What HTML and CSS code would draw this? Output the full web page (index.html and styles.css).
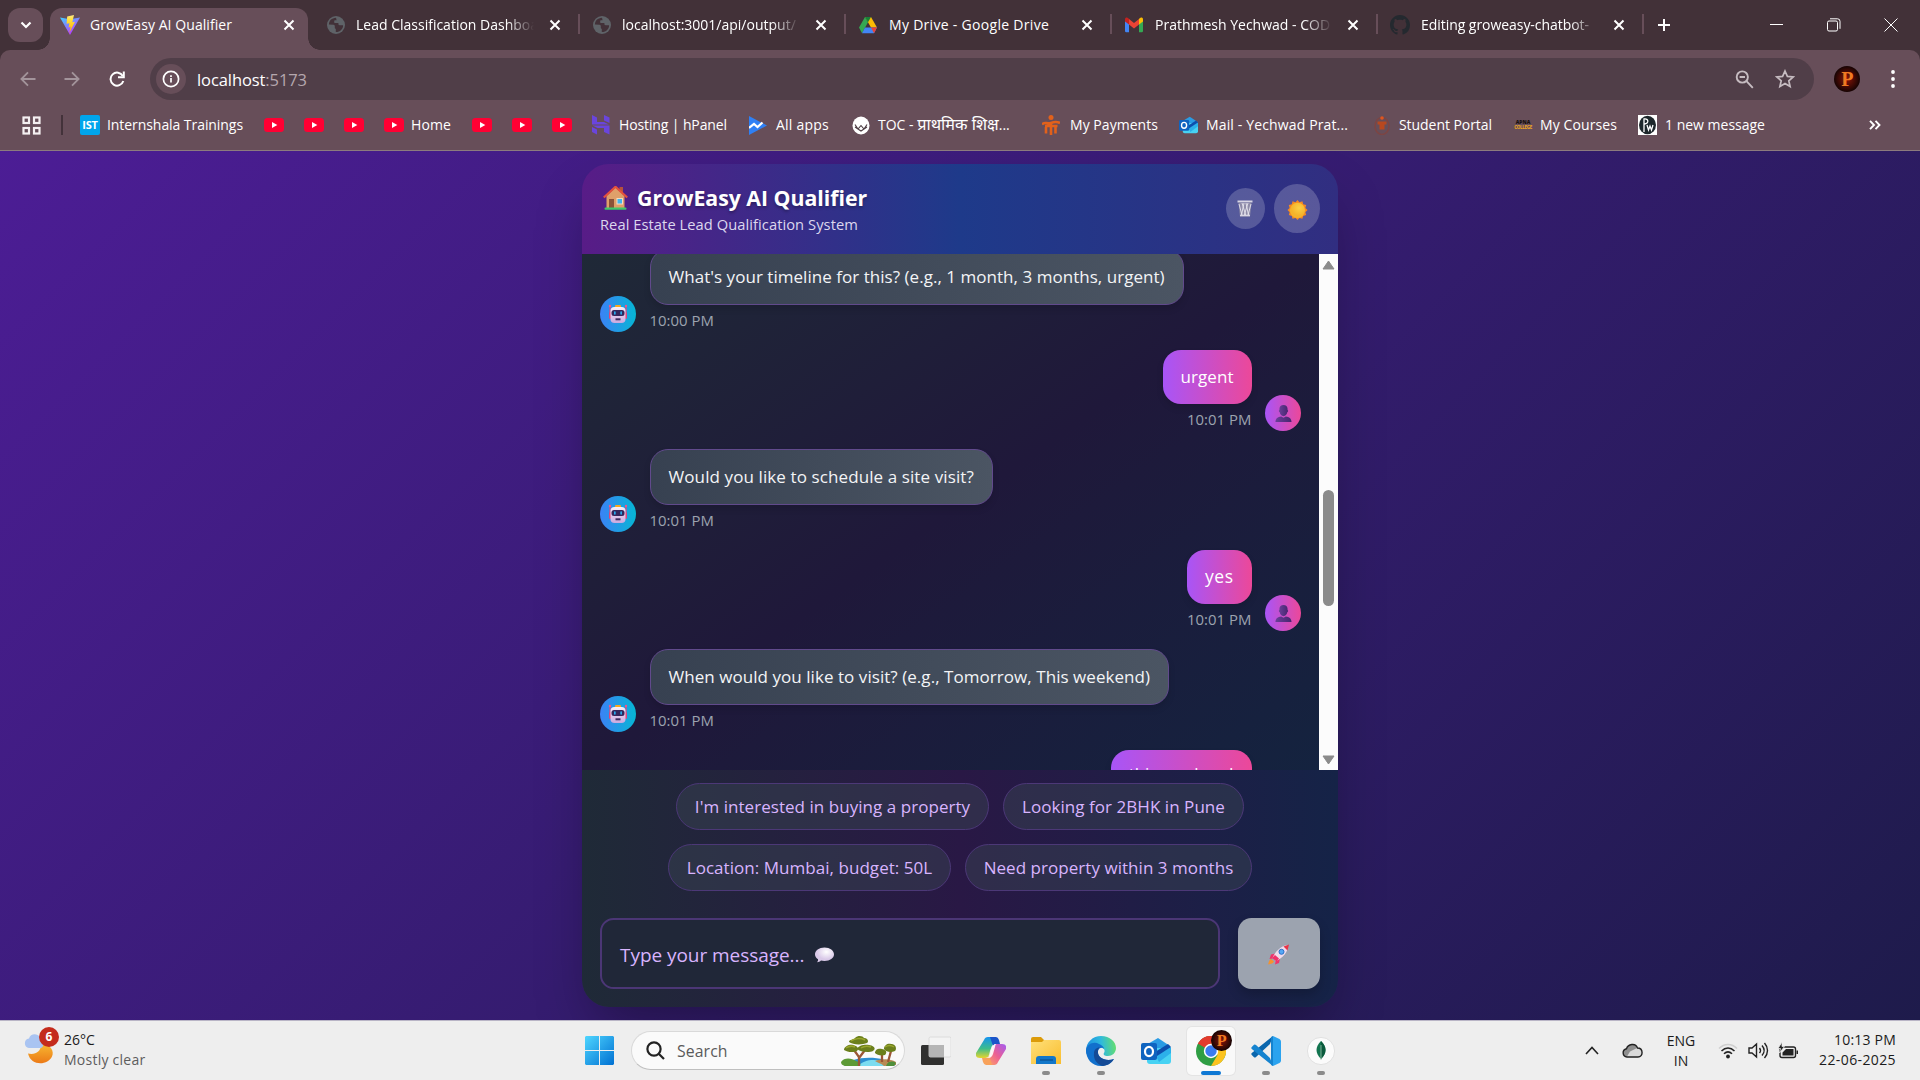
FILE: index.html
```html
<!DOCTYPE html>
<html lang="en">
<head>
<meta charset="utf-8">
<title>GrowEasy AI Qualifier</title>
<link rel="stylesheet" href="styles.css">
</head>
<body>
<svg class="defs" width="0" height="0" aria-hidden="true">
  <defs>
    <linearGradient id="g-bolt" x1="0" y1="0" x2="0" y2="1"><stop offset="0" stop-color="#ffea83"/><stop offset=".3" stop-color="#ffdd35"/><stop offset="1" stop-color="#ffa800"/></linearGradient>
    <linearGradient id="g-vite" x1="0" y1="0" x2=".6" y2="1"><stop offset="0" stop-color="#41d1ff"/><stop offset="1" stop-color="#bd34fe"/></linearGradient>
    <linearGradient id="g-head" x1="0" y1="0" x2="0" y2="1"><stop offset="0" stop-color="#f8eef8"/><stop offset="1" stop-color="#c8a9e0"/></linearGradient>
    <linearGradient id="g-user" x1="0" y1="0" x2="1" y2="0"><stop offset="0" stop-color="#6a3f99"/><stop offset="1" stop-color="#47256f"/></linearGradient>
    <linearGradient id="g-win" gradientUnits="userSpaceOnUse" x1="0" y1="0" x2="29" y2="29"><stop offset="0" stop-color="#4fd6ff"/><stop offset="1" stop-color="#0070d2"/></linearGradient>
    <linearGradient id="g-edge" x1="0" y1=".3" x2="1" y2=".2"><stop offset="0" stop-color="#1d8fe0"/><stop offset=".5" stop-color="#2fb9dd"/><stop offset="1" stop-color="#66e06a"/></linearGradient>
    <linearGradient id="g-moon" x1="0" y1="0" x2="0" y2="1"><stop offset="0" stop-color="#f7b731"/><stop offset="1" stop-color="#ec7a17"/></linearGradient>
    <linearGradient id="g-folder" x1="0" y1="0" x2="1" y2="1"><stop offset="0" stop-color="#ffe07a"/><stop offset="1" stop-color="#f9bd2e"/></linearGradient>
    <linearGradient id="g-copa" x1="0" y1="0" x2="0" y2="1"><stop offset="0" stop-color="#1592f0"/><stop offset=".55" stop-color="#3cbd8c"/><stop offset="1" stop-color="#e6d52d"/></linearGradient>
    <linearGradient id="g-copb" x1="1" y1="0" x2="0" y2="1"><stop offset="0" stop-color="#a25cf2"/><stop offset=".5" stop-color="#ec5f93"/><stop offset="1" stop-color="#ffab62"/></linearGradient>
    <radialGradient id="g-ava"><stop offset="0" stop-color="#8a1508"/><stop offset="1" stop-color="#160303"/></radialGradient>
    <radialGradient id="g-sun" cx=".6" cy=".35"><stop offset="0" stop-color="#fbd046"/><stop offset="1" stop-color="#f5b32a"/></radialGradient>
    <radialGradient id="g-talk" cx=".6" cy=".3"><stop offset="0" stop-color="#fff"/><stop offset="1" stop-color="#d9c9e8"/></radialGradient>
    <symbol id="close" viewBox="0 0 12 12"><path d="M1.500 1.500l9 9M10.500 1.500l-9 9" stroke="#fff" stroke-width="2"/></symbol>
    <symbol id="globe" viewBox="0 0 20 20"><circle cx="10" cy="10" r="9" fill="#5f6368"/><path d="M10 2.800C5.500 3 3 6 2.900 9.500l4.600.3c1 .1 1.300.8 1.300 1.500v1.500c0 .6.400 1 1 1v3.300c4 .2 7.300-2.800 7.300-6.800h-3.500c-.8 0-1.200-.5-1.200-1.200V8H9.200c-.7 0-1-.4-1-1V6.200c0-.6.400-1 1-1h1.400z" fill="#423138"/></symbol>
    <symbol id="yt" viewBox="0 0 20 14"><rect width="20" height="14" rx="3.500" fill="#ff0033"/><path d="M8 4l5.300 3L8 10z" fill="#fff"/></symbol>
    <symbol id="outlook" viewBox="0 0 30 26"><path d="M5 7L17 0l12 8v5H5z" fill="#2a9be4"/><path d="M6 10h24v13a3 3 0 01-3 3H9a3 3 0 01-3-3z" fill="#47d2f3"/><path d="M15 18l15-9v6L18 24z" fill="#2cb0ea"/><path d="M14 14L27 6l3 3-14 9z" fill="#0d4fae"/><rect y="5" width="16" height="17" rx="2" fill="#0f64c0"/><ellipse cx="8" cy="13.500" rx="4" ry="4.600" fill="none" stroke="#fff" stroke-width="2.200"/></symbol>
    <symbol id="robot" viewBox="0 0 20 20"><path d="M2 2v9M18 2v9" stroke="#d84a86" stroke-width="1.300"/><circle cx="2" cy="2" r="1.200" fill="#f2548c"/><circle cx="18" cy="2" r="1.200" fill="#f2548c"/><rect x="1" y="8" width="3" height="7" rx="1.500" fill="#e0457c"/><rect x="16" y="8" width="3" height="7" rx="1.500" fill="#e0457c"/><rect x="7" y="1" width="6" height="4" rx="1" fill="#f6a823"/><rect x="2.500" y="3" width="15" height="16" rx="4" fill="url(#g-head)"/><rect x="3.500" y="6" width="13" height="6" rx="2.500" fill="#33265c"/><rect x="6" y="7.300" width="1.700" height="3.400" rx=".8" fill="#27a8e8"/><rect x="12.300" y="7.300" width="1.700" height="3.400" rx=".8" fill="#27a8e8"/><rect x="7.500" y="14.300" width="5" height="2" fill="#3d2b5e"/></symbol>
    <symbol id="user" viewBox="0 0 18 19"><path d="M4.700 4.500C4.700 2 6.400.5 9 .5s4.300 1.500 4.300 4v1.200c.9.200.8 2-.2 2.300C12.600 10.500 11 12.300 9 12.300S5.400 10.500 4.900 8c-1-.3-1.100-2.100-.2-2.300z" fill="url(#g-user)"/><path d="M.5 18.500c0-3.700 2.600-5.500 6-5.900l2.500 1.500 2.500-1.500c3.400.4 6 2.200 6 5.900z" fill="url(#g-user)"/></symbol>
    <symbol id="ava" viewBox="0 0 26 26"><circle cx="13" cy="13" r="13" fill="url(#g-ava)"/><text x="13.300" y="20" text-anchor="middle" class="ava-letter">P</text></symbol>
  </defs>
</svg>

<div class="tabstrip">
  <div class="tab-search"><svg width="12" height="8" viewBox="0 0 12 8"><path d="M1.500 1.500L6 6l4.500-4.500" fill="none" stroke="#fff" stroke-width="2.200"/></svg></div>
  <div class="tab active">
    <svg width="20" height="20" viewBox="0 0 20 20"><path d="M0 2.500L10 20 20 2.500 10 4.300z" fill="url(#g-vite)"/><path d="M14 0L7.200 1.400l-.6 7.400 2.800-.6-.8 4.200 2-.6-1.300 6.300 5.700-11.300-2.700.5z" fill="url(#g-bolt)"/></svg>
    <span class="tab-title"><span class="t-grow">GrowEasy AI Qualifier</span></span><svg class="x" width="12" height="12"><use href="#close"/></svg>
  </div>
  <div class="tab"><svg width="20" height="20"><use href="#globe"/></svg><span class="tab-title fade"><span>Lead Classification Dashboa</span></span><svg class="x" width="12" height="12"><use href="#close"/></svg></div>
  <div class="tab"><svg width="20" height="20"><use href="#globe"/></svg><span class="tab-title fade"><span>localhost:3001/api/output/</span></span><svg class="x" width="12" height="12"><use href="#close"/></svg></div>
  <div class="tab"><svg width="20" height="20" viewBox="0 0 20 20"><path d="M7 2h6l6 10.500h-6z" fill="#fbbc04"/><path d="M7 2l3 5.200-6 11-3-5.700z" fill="#34a853"/><path d="M4 18.200l3-5.700h12l-3 5.700z" fill="#4285f4"/><path d="M13 12.500h6l-3 5.700z" fill="#ea4335"/><path d="M7 2h6l-3 5.200z" fill="#188038"/></svg><span class="tab-title"><span class="t-drive">My Drive - Google Drive</span></span><svg class="x" width="12" height="12"><use href="#close"/></svg></div>
  <div class="tab"><svg width="20" height="20" viewBox="0 0 20 20"><path d="M1 4.500V16q0 1.200 1.200 1.200H5V8z" fill="#4285f4"/><path d="M19 4.500V16q0 1.200-1.200 1.200H15V8z" fill="#34a853"/><path d="M5 9.500V4l5 4 5-4v5.500l-5 4z" fill="#ea4335"/><path d="M1 4.500C1 2.500 3 2 4.300 3.200L5 4v5.500L1 6.500z" fill="#c5221f"/><path d="M19 4.500c0-2-2-2.500-3.300-1.300L15 4v5.500l4-3z" fill="#fbbc04"/></svg><span class="tab-title fade"><span class="t-mail">Prathmesh Yechwad - COD</span></span><svg class="x" width="12" height="12"><use href="#close"/></svg></div>
  <div class="tab"><svg width="20" height="20" viewBox="0 0 16 16"><path fill="#24292f" d="M8 0C3.580 0 0 3.580 0 8c0 3.540 2.290 6.530 5.470 7.590.4.070.55-.17.55-.38 0-.19-.01-.82-.01-1.490-2.010.37-2.530-.49-2.690-.94-.09-.23-.48-.94-.82-1.130-.28-.15-.68-.52-.01-.53.63-.01 1.080.58 1.230.82.72 1.210 1.870.87 2.330.66.070-.52.280-.87.510-1.070-1.780-.2-3.640-.89-3.640-3.950 0-.87.310-1.590.82-2.150-.08-.2-.36-1.020.08-2.120 0 0 .67-.21 2.200.82.640-.18 1.320-.27 2-.27s1.360.09 2 .27c1.530-1.040 2.200-.82 2.200-.82.440 1.100.160 1.920.080 2.120.51.560.82 1.270.82 2.150 0 3.070-1.870 3.750-3.650 3.950.29.250.54.730.54 1.480 0 1.070-.01 1.930-.01 2.200 0 .21.150.46.55.38A8.010 8.010 0 0016 8c0-4.420-3.580-8-8-8z"/></svg><span class="tab-title fade"><span class="t-git">Editing groweasy-chatbot-</span></span><svg class="x" width="12" height="12"><use href="#close"/></svg></div>
  <div class="new-tab"><svg width="14" height="14" viewBox="0 0 14 14"><path d="M7 1v12M1 7h12" stroke="#fff" stroke-width="2"/></svg></div>
  <div class="win-buttons">
    <svg width="14" height="14" viewBox="0 0 14 14"><path d="M0 6.500h13" stroke="#fff"/></svg>
    <svg width="14" height="14" viewBox="0 0 14 14" fill="none" stroke="#fff"><rect x=".5" y="3" width="10" height="10" rx="1.500"/><path d="M3 .8h7.500a2.500 2.500 0 012.500 2.500v7.500"/></svg>
    <svg width="14" height="14" viewBox="0 0 14 14"><path d="M.5.5l13 13M13.500.5l-13 13" stroke="#fff"/></svg>
  </div>
</div>

<div class="toolbar">
  <div class="nav-row">
    <svg class="nav back" width="16" height="16" viewBox="0 0 16 16" fill="none" stroke="#a3949b" stroke-width="1.800"><path d="M15.500 8H1.500M8 1.300L1.400 8 8 14.700"/></svg>
    <svg class="nav fwd" width="16" height="16" viewBox="0 0 16 16" fill="none" stroke="#a3949b" stroke-width="1.800"><path d="M.5 8h14M8 1.300L14.600 8 8 14.700"/></svg>
    <svg class="nav reload" width="16" height="16" viewBox="0 0 16 16" fill="none" stroke="#fff" stroke-width="2"><path d="M13.800 5A6.500 6.500 0 1014.300 10"/><path d="M14.800.5v5.800H9"/></svg>
    <div class="omnibox">
      <div class="info"><svg width="18" height="18" viewBox="0 0 18 18"><circle cx="9" cy="9" r="7.600" fill="none" stroke="#fff" stroke-width="1.700"/><path d="M9 8v4.600M9 5.200v1.700" stroke="#fff" stroke-width="1.700"/></svg></div>
      <span class="url"><span>localhost<span class="port">:5173</span></span></span>
      <svg class="mag" width="19" height="19" viewBox="0 0 19 19" fill="none" stroke="#c6bcc1" stroke-width="1.900"><circle cx="7.300" cy="7" r="5.600"/><path d="M4.600 7H10M11.500 11.200l6.300 6.600"/></svg>
      <svg class="star" width="20" height="20" viewBox="0 0 20 20" fill="none" stroke="#c6bcc1" stroke-width="1.700"><path d="M10 2l2.400 5.400 5.800.5-4.400 3.900 1.300 5.800L10 14.500l-5.100 3.100 1.300-5.800-4.400-3.900 5.800-.5z"/></svg>
    </div>
    <svg class="profile" width="26" height="26"><use href="#ava"/></svg>
    <svg class="kebab" width="4" height="18" viewBox="0 0 4 18" fill="#fff"><circle cx="2" cy="2" r="1.900"/><circle cx="2" cy="9" r="1.900"/><circle cx="2" cy="16" r="1.900"/></svg>
  </div>
  <div class="bookmarks">
    <svg class="apps" width="19" height="19" viewBox="0 0 19 19" fill="none" stroke="#f5f0f2" stroke-width="2.200"><rect x="1.500" y="1.500" width="5.500" height="5.500"/><rect x="12" y="1.500" width="5.500" height="5.500"/><rect x="1.500" y="12" width="5.500" height="5.500"/><rect x="12" y="12" width="5.500" height="5.500"/></svg>
    <span class="bar"></span>
    <div class="bm b-ist"><span class="ist">IST</span><span class="t-ist">Internshala Trainings</span></div>
    <div class="bm b-yt"><svg width="20" height="14"><use href="#yt"/></svg></div>
    <div class="bm b-yt"><svg width="20" height="14"><use href="#yt"/></svg></div>
    <div class="bm b-yt"><svg width="20" height="14"><use href="#yt"/></svg></div>
    <div class="bm b-home"><svg width="20" height="14"><use href="#yt"/></svg><span class="t-home">Home</span></div>
    <div class="bm b-yt"><svg width="20" height="14"><use href="#yt"/></svg></div>
    <div class="bm b-yt"><svg width="20" height="14"><use href="#yt"/></svg></div>
    <div class="bm b-yt"><svg width="20" height="14"><use href="#yt"/></svg></div>
    <div class="bm b-host"><svg width="18" height="20" viewBox="0 0 18 20" fill="#6a45dc"><path d="M0 0l5 2.500V7h7l5 2.500H0zM12 0l5.500 2.500V8L12 5.500zM17.500 19.500L12 17v-4H5.500L.5 10.500h17zM0 12l5 2.500v5L0 17z"/></svg><span class="t-host">Hosting | hPanel</span></div>
    <div class="bm b-all"><svg width="18" height="19" viewBox="0 0 18 19"><path d="M0 0l18 9.500L0 19z" fill="#2f80f5"/><path d="M0 12l5-4 3.500 3 5-4.500" stroke="#fff" stroke-width="2.200" fill="none"/></svg><span class="t-all">All apps</span></div>
    <div class="bm b-toc"><svg width="18" height="19" viewBox="0 0 18 19"><ellipse cx="9" cy="9.500" rx="8.500" ry="9" fill="#fff"/><path d="M3 8.500l3 4.500 3-3.500 3 3.500 3-4.500M3 11l6 4 6-4" stroke="#4c3d43" stroke-width="1.100" fill="none"/></svg><span class="t-toc">TOC - <span class="deva">प्राथमिक शिक्ष</span>...</span></div>
    <div class="bm b-pay"><svg width="18" height="20" viewBox="0 0 18 20" fill="none" stroke="#e2611b" stroke-width="2.600"><circle cx="9" cy="2.500" r="2.500" fill="#e2611b" stroke="none"/><path d="M0 9.500c3-3.500 5 0 9-1.500s6-1.500 9 0M3 11h12.500M4 12v6.500M9 9v11M13.500 12v6.500"/></svg><span class="t-pay">My Payments</span></div>
    <div class="bm b-mail"><svg width="19" height="18"><use href="#outlook"/></svg><span class="t-ml">Mail - Yechwad Prat...</span></div>
    <div class="bm b-stu"><svg width="16" height="19" viewBox="0 0 16 19"><ellipse cx="8" cy="10" rx="7" ry="8.500" fill="none" stroke="#7d4543" stroke-width="1.500"/><circle cx="8" cy="2" r="1.800" fill="#e0561f"/><path d="M3.500 5.500h9v3h-2v5h-5v-5h-2z" fill="#b8481f"/></svg><span class="t-stu">Student Portal</span></div>
    <div class="bm b-cou"><span class="apna"><b>APNA</b><i>COLLEGE</i></span><span class="t-cou">My Courses</span></div>
    <div class="bm b-new"><svg width="19" height="20" viewBox="0 0 19 20"><rect width="19" height="20" fill="#fff"/><ellipse cx="9.500" cy="10" rx="8.500" ry="9.200" fill="#1d272b"/><path d="M6 17V4c5-1 5 5 .5 5M9 10l1.500 5L12 11l1.500 4L15 10" fill="none" stroke="#fff" stroke-width="1.300"/></svg><span>1 new message</span></div>
    <svg class="more" width="12" height="10" viewBox="0 0 12 10" fill="none" stroke="#fff" stroke-width="1.900"><path d="M1 .8L5 5 1 9.200M6.500.8l4 4.200-4 4.200"/></svg>
  </div>
</div>

<main class="page">
  <section class="card">
    <header class="head">
      <div class="titles">
        <h1><svg width="25" height="24" viewBox="0 0 25 24"><path d="M16.500 1h3.500v7h-3.500z" fill="#b5523c"/><path d="M3.500 10L12.500 1.500 21.500 10v12h-18z" fill="#dfa06a"/><path d="M.8 11.500L12.500.8l11.700 10.700" fill="none" stroke="#e4513c" stroke-width="2.200"/><rect x="6" y="13" width="5" height="9" fill="#8a5138"/><rect x="14" y="12.500" width="5.500" height="5.500" fill="#42b5ee" stroke="#f6dcc0"/><rect x="1.500" y="21.500" width="22" height="2.300" rx="1" fill="#3fc76a"/></svg><span class="t-h1">GrowEasy AI Qualifier</span></h1>
        <p><span class="t-sub">Real Estate Lead Qualification System</span></p>
      </div>
      <div class="head-actions">
        <div class="round trash"><svg width="16" height="17" viewBox="0 0 16 17"><path d="M.5.500h15v2h-15z" fill="#d8d6e4"/><path d="M1.500 2.500h13l-1.500 14H3z" fill="#8f8ca8"/><path d="M2 4l3 11M5 3l4 13M9 3l2.500 12M14 4l-3 11M11 3L7 16M7 3L4.500 15" stroke="#e8e7ef" stroke-width=".9"/><path d="M3 15.500h10" stroke="#d8d6e4" stroke-width="1.500"/></svg></div>
        <div class="round sun"><svg width="21" height="21" viewBox="0 0 21 21"><path d="M10.500 0l2 2.200 2.900-.9.800 2.900 3 .8-.8 2.900 2.200 2.100-2.200 2.200.8 2.900-3 .8-.8 2.900-2.900-.9-2 2.200-2-2.200-3 .9-.7-2.900-3-.8.800-2.900L.5 10l2.100-2.100L1.800 5l3-.8.700-2.900 3 .9z" fill="#f58a21"/><circle cx="10.500" cy="10.300" r="7.600" fill="url(#g-sun)"/></svg></div>
      </div>
    </header>

    <div class="chat">
      <div class="messages">
        <div class="msg bot first"><div class="avatar"><svg width="20" height="20"><use href="#robot"/></svg></div><div class="body"><div class="bubble"><span class="m-1">What's your timeline for this? (e.g., 1 month, 3 months, urgent)</span></div><time><span>10:00 PM</span></time></div></div>
        <div class="msg me"><div class="body"><div class="bubble"><span class="m-2">urgent</span></div><time><span>10:01 PM</span></time></div><div class="avatar"><svg width="17" height="19"><use href="#user"/></svg></div></div>
        <div class="msg bot"><div class="avatar"><svg width="20" height="20"><use href="#robot"/></svg></div><div class="body"><div class="bubble"><span class="m-3">Would you like to schedule a site visit?</span></div><time><span>10:01 PM</span></time></div></div>
        <div class="msg me"><div class="body"><div class="bubble"><span class="m-4">yes</span></div><time><span>10:01 PM</span></time></div><div class="avatar"><svg width="17" height="19"><use href="#user"/></svg></div></div>
        <div class="msg bot"><div class="avatar"><svg width="20" height="20"><use href="#robot"/></svg></div><div class="body"><div class="bubble"><span class="m-5">When would you like to visit? (e.g., Tomorrow, This weekend)</span></div><time><span>10:01 PM</span></time></div></div>
        <div class="msg me last"><div class="body"><div class="bubble"><span class="m-6">this weekend</span></div></div><div class="avatar ghost"></div></div>
      </div>
      <div class="scroll"><svg width="13" height="10" viewBox="0 0 13 10"><path d="M6.500 1L12 9H1z" fill="#8b8b8b" stroke="#8b8b8b" stroke-linejoin="round"/></svg><span class="thumb"></span><svg class="down" width="13" height="10" viewBox="0 0 13 10"><path d="M6.500 9L12 1H1z" fill="#8b8b8b" stroke="#8b8b8b" stroke-linejoin="round"/></svg></div>
    </div>

    <footer class="foot">
      <div class="chips">
        <button class="chip c1"><span>I'm interested in buying a property</span></button><button class="chip c2"><span>Looking for 2BHK in Pune</span></button>
        <button class="chip c3"><span>Location: Mumbai, budget: 50L</span></button><button class="chip c4"><span>Need property within 3 months</span></button>
      </div>
      <div class="compose">
        <div class="input"><span class="t-type">Type your message...</span><svg width="21" height="16" viewBox="0 0 21 16"><path d="M10.500.5C16 .5 20 3.500 20 7.300s-4 6.700-9.500 6.700c-1.500 0-2.500-.1-3.500-.4-1 1-2.500 1.600-4 1.600.8-.8 1.200-1.800 1-3C2 11 1 9.300 1 7.300 1 3.500 5 .5 10.500.5z" fill="url(#g-talk)"/></svg></div>
        <div class="send"><svg width="22" height="21" viewBox="0 0 22 21"><path d="M3 15c-2 1-2.500 3.500-2.800 5.500C2.500 20 5 19.500 6 17.500z" fill="#f6922e"/><path d="M7.500 9.500L3 10.500 1.500 15l5-1zM12 14.500l-1 4.500-4 1.500 1-5z" fill="#f0336b"/><path d="M4.500 14C7 8 12 2 20 1c.5 7-5.500 13-12 16z" fill="#f0dcec"/><path d="M15.500 2.500L21 .5l-1.500 6z" fill="#e83447"/><path d="M4 14l4.500 3.500 2.500-3L7 11z" fill="#f0336b"/><circle cx="13.500" cy="7.800" r="2.500" fill="#55a8f5" stroke="#2b6fc9"/></svg></div>
      </div>
    </footer>
  </section>
</main>

<div class="taskbar">
  <div class="weather">
    <div class="w-icon"><svg width="34" height="36" viewBox="0 0 34 36"><path d="M4 21.500c7 1.500 13-1.500 13-9 8-2 14 6 11 12-4 9-21 10-24-3z" fill="url(#g-moon)"/><path d="M5 16a4.800 4.800 0 010-9.500C6 1 14 1 15.500 5c4-1 6 11 1 11z" fill="#a9c4f2"/></svg><b>6</b></div>
    <div class="w-text"><span>26°C</span><span class="t-clear">Mostly clear</span></div>
  </div>
  <svg class="win" width="29" height="29" viewBox="0 0 29 29"><path d="M1 0h13v14H0V1zM15 0h13l1 1v13H15zM0 15h14v14H1l-1-1zM15 15h14v13l-1 1H15z" fill="url(#g-win)"/></svg>
  <div class="search"><svg width="19" height="19" viewBox="0 0 19 19" fill="none" stroke="#222" stroke-width="2.200"><circle cx="8" cy="8" r="6.600"/><path d="M12.700 12.700l5.300 5.300"/></svg><span class="t-search">Search</span>
    <svg class="trees" width="56" height="30" viewBox="0 0 56 30"><path d="M3 30c6-10 40-12 51 0z" fill="#2c8ed0"/><path d="M17 30c8-8 20-7 33-2l-5 2z" fill="#7bdcf0"/><path d="M0 26c3-5 11-4 15-1 4 1 5 3 4 5H4c-3-1-4-2-4-4z" fill="#5d9a35"/><path d="M34 25c6-2 15-3 21 1v3l-12 1c-3-3-6-3-9-5z" fill="#b98a54"/><path d="M13 14l5 7v9M24 14l-6 8M41 18v8M50 15l-3 11" fill="none" stroke="#9c5636" stroke-width="2.300"/><path d="M8 6c0-3 5-2 6-4 3-3 8-2 9 0 4 0 5 4 3 5-5 2-14 2-18-1zM3 14c0-4 6-6 9-5 5 1 6 4 4 6-4 2-10 1-13-1zM16 13c1-4 9-5 12-4 6 1 7 4 4 6-4 2-13 1-16-2zM34 17c0-4 4-5 7-4 5 1 5 4 3 6-4 1-8 0-10-2zM43 13c0-4 4-6 7-5 5 0 6 5 4 7-4 2-9 1-11-2z" fill="#6b7f1c"/><path d="M10 5c4-3 10-3 14-1M5 12c3-2 7-2 9-1M20 12c3-2 7-2 10-1M44 11c3-2 6-2 9 0" stroke="#9aa62e" stroke-width="1.500" fill="none"/><path d="M46 28c2-3 6-3 9-1l-2 3h-8z" fill="#4f8f3c"/></svg>
  </div>
  <div class="task"><svg width="30" height="30" viewBox="0 0 30 30"><rect x="0" y="9" width="23" height="20" rx="1.500" fill="#30302f"/><rect x="8" y="1" width="22" height="20" rx="1.500" fill="#f4f4f4" fill-opacity=".8" stroke="#d5d5d5" stroke-width=".8"/><path d="M8 9h15v12H8z" fill="#b5b5b5"/></svg></div>
  <div class="task"><svg width="30" height="28" viewBox="0 0 30 28"><path d="M8 3Q9 0 12 0h8l-3 7q-2 3-3 7l-1 4q-1 3-4 3H4q-5 0-4-5z" fill="url(#g-copa)"/><path d="M14 0h6q2 0 3 3l1 4h-4q-2 0-3 2z" fill="#1b55c9"/><path d="M22 25q-1 3-4 3h-8l3-7q2-3 3-7l1-4q1-3 4-3h5q5 0 4 5z" fill="url(#g-copb)"/><path d="M16 28h-6q-2 0-3-3l-1-4h4q2 0 3-2z" fill="#f8a25a"/><path d="M20 7q-3 0-4 4l-2 7q-1 3-4 3 3 0 4.500-.5T17 17l2-7q.3-2 1-3z" fill="#fff" opacity=".9"/></svg></div>
  <div class="task run"><svg width="30" height="27" viewBox="0 0 30 27"><path d="M0 2q0-2 2-2h8l3 3v6H0z" fill="#dc9b0a"/><path d="M0 5h11l2-2h15q2 0 2 2v22H0z" fill="url(#g-folder)"/><path d="M5 27v-5q0-3 3-3h14q3 0 3 3v5z" fill="#1277c9"/><path d="M9 23h13" stroke="#0b4f8f" stroke-width="1.200"/></svg></div>
  <div class="task run"><svg width="30" height="30" viewBox="0 0 30 30"><path d="M0 15C0 6 7 0 15 0c9 0 15 6 15 12 0 5-4 8-8 8-4 0-5-1.500-4-3 2-3-1-6-5-5-5 1-7 7-5 11-3 0-8-3-8-8z" fill="url(#g-edge)"/><path d="M0 14C1 8 8 5 13 8c3 1 5 3 5 5-1-2-5-2-6 2-1 7 8 11 16 8-3 5-8 7-13 7C6 30 0 23 0 14z" fill="#1270cc"/><path d="M8 17c-1 7 4 12 9 13 6-1 9-4 11-7-8 3-17-1-16-8 0-2 1-3 2-3.500-3-.5-6 2-6 5.500z" fill="#154b96"/></svg></div>
  <div class="task"><svg width="30" height="26"><use href="#outlook"/></svg></div>
  <div class="task current"><svg width="30" height="30" viewBox="0 0 30 30"><circle cx="15" cy="15" r="15" fill="#2f9e44"/><path d="M15 15L2 7.500A15 15 0 0128 7.500z" fill="#e33b2e"/><path d="M15 7.500h13A15 15 0 0115 30l6.500-11z" fill="#fcc31e"/><path d="M15 15L2 7.500A15 15 0 0115 0z" fill="#e33b2e"/><circle cx="15" cy="15" r="7.200" fill="#fff"/><circle cx="15" cy="15" r="5.700" fill="#3b7cf0"/></svg><svg class="badge" width="21" height="21"><use href="#ava"/></svg></div>
  <div class="task run"><svg width="30" height="30" viewBox="0 0 30 30"><path d="M22 0l-3 8-14 13q-1 1-2 .2L.8 19q-1-1 0-2z" fill="#0a66ad"/><path d="M22 30l-3-8L5 9Q4 8 3 8.800L.8 11q-1 1 0 2z" fill="#1583cf"/><path d="M22 0l6.500 3Q30 4 30 5.500v19q0 1.500-1.500 2.500L22 30z" fill="#2ba3ef"/><path d="M22 0v30l-2-1V1z" fill="#1583cf"/></svg></div>
  <div class="task run"><svg width="28" height="28" viewBox="0 0 28 28"><circle cx="14" cy="14" r="13.600" fill="#fbfbfb" stroke="#dcdcdc" stroke-width=".8"/><path d="M14 4c6 6 6 12 0 18-6-6-6-12 0-18z" fill="#12744f"/><path d="M14 4c6 6 6 12 0 18z" fill="#0a5a3c"/><path d="M14 8v15" stroke="#9fc4ae" stroke-width=".8"/></svg></div>
  <div class="tray">
    <svg class="up" width="14" height="9" viewBox="0 0 14 9"><path d="M1 8l6-6.500L13 8" fill="none" stroke="#222" stroke-width="1.600"/></svg>
    <svg class="cloud" width="21" height="15" viewBox="0 0 21 15"><path d="M5 14a4.200 4.200 0 01-.5-8.300C6 1 13.500-.5 15.500 5 21.500 5 21.500 14 16 14z" fill="#dadada"/><path d="M5 13.500a4 4 0 010-8C7 1 13 .5 15 5L8 8.500z" fill="#8f8f8f"/><path d="M5 14a4.200 4.200 0 01-.5-8.300C6 1 13.500-.5 15.500 5 21.500 5 21.500 14 16 14z" fill="none" stroke="#222" stroke-width="1.400"/></svg>
    <div class="lang"><span class="t-eng">ENG</span><span>IN</span></div>
    <svg class="wifi" width="20" height="16" viewBox="0 0 20 16" fill="none" stroke="#222" stroke-width="1.500"><path d="M1 5.500C6 0 14 0 19 5.500" stroke="#cfcfcf"/><path d="M3.500 8c4-4 9-4 13 0M6 10.800c2.500-2.500 5.500-2.500 8 0"/><circle cx="10" cy="13.500" r="1.900" fill="#222" stroke="none"/></svg>
    <svg class="vol" width="21" height="17" viewBox="0 0 21 17" fill="none" stroke="#222" stroke-width="1.400"><path d="M1 6v5h3l4.500 4V2L4 6zM11.500 6c1.300 1.600 1.300 3.400 0 5M14 3.500c2.600 3 2.600 7 0 10M16.500 1c4 4.500 4 10.500 0 15"/></svg>
    <svg class="bat" width="21" height="17" viewBox="0 0 21 17"><rect x="2" y="5" width="15.500" height="10.500" rx="2" fill="none" stroke="#222" stroke-width="1.400"/><path d="M4.500 13.500v-3L8 7h7.500v6.500zM18.500 8.500h1.500v3.500h-1.500z" fill="#222"/><path d="M4 0L0 6.500h2.500L1.500 11 6.500 4.500H4z" fill="#222" stroke="#eee" stroke-width=".8"/></svg>
    <div class="clock"><span class="t-time">10:13 PM</span><span class="t-date">22-06-2025</span></div>
  </div>
</div>
</body>
</html>
```
FILE: styles.css
```css
* { box-sizing: border-box; }
html, body { margin: 0; width: 1920px; height: 1080px; overflow: hidden; }
body { display: flex; flex-direction: column; font-family: "Open Sans", "Noto Sans", sans-serif; font-size: 14px; color: #fff; background: #423138; }
svg { display: block; flex: none; }
.defs { position: absolute; }
.ava-letter { font: bold 20px "Liberation Serif", serif; fill: #f07a22; }
span { white-space: nowrap; }

/* tab strip */
.tabstrip { height: 50px; flex: none; display: flex; align-items: stretch; background: #423138; }
.tab-search { width: 35px; height: 34px; margin: 8px 4px 0 8px; border-radius: 12px; background: #674e59; display: flex; align-items: center; justify-content: center; }
.tab { position: relative; width: 266px; padding: 0 18px 0 13px; display: flex; align-items: center; }
.tab:not(.active)::after { content: ""; position: absolute; right: -1px; top: 14px; width: 2px; height: 20px; background: #674e59; }
.tab-title { flex: 1; margin: 0 12px 0 10px; overflow: hidden; display: flex; line-height: 22px; }
.fade { -webkit-mask-image: linear-gradient(90deg, #000 150px, transparent 178px); mask-image: linear-gradient(90deg, #000 150px, transparent 178px); }
.t-grow { letter-spacing: .07px; }
.t-drive { letter-spacing: .3px; padding-left: 1px; }
.t-mail { padding-left: 1px; }
.t-git { padding-left: 1px; letter-spacing: -.05px; }
.tab.active { margin-top: 8px; padding-bottom: 8px; isolation: isolate; }
.tab.active::before { content: ""; position: absolute; z-index: -1; left: 3px; right: 5px; top: 0; bottom: 0; border-radius: 12px 12px 0 0; background: #674e59; }
.tab.active::after { content: ""; position: absolute; z-index: -1; left: -9px; right: -7px; bottom: 0; height: 12px; background: radial-gradient(circle at 0 0, transparent 11.5px, #674e59 12px) left / 12px 12px no-repeat, radial-gradient(circle at 100% 0, transparent 11.5px, #674e59 12px) right / 12px 12px no-repeat; }
.new-tab { width: 44px; padding-left: 14px; display: flex; align-items: center; }
.win-buttons { margin-left: auto; padding-right: 22px; display: flex; align-items: center; gap: 43px; }

/* toolbar */
.toolbar { height: 101px; flex: none; background: #674e59; border-bottom: 1px solid #8c7b7e; border-radius: 10px 10px 0 0; }
.nav-row { height: 50px; padding-top: 8px; display: flex; align-items: center; }
.back { margin-left: 20px; }
.fwd { margin-left: 28px; }
.reload { margin-left: 29px; }
.omnibox { width: 1664px; height: 42px; margin-left: 25px; border-radius: 21px; background: #503e48; display: flex; align-items: center; padding-left: 6px; }
.info { width: 30px; height: 30px; border-radius: 50%; background: #674e59; display: flex; align-items: center; justify-content: center; }
.url { flex: 1; margin-left: 11px; font-size: 16.500px; letter-spacing: -.09px; display: flex; }
.port { color: #b5a7ae; }
.mag { margin-right: 21px; }
.star { margin-right: 19px; }
.profile { margin-left: 20px; }
.kebab { margin-left: 31px; }
.bookmarks { height: 50px; display: flex; align-items: center; padding-left: 22px; }
.bar { width: 2px; height: 20px; background: #43323a; margin: 0 17px 0 20px; }
.bm { display: flex; align-items: center; gap: 7px; line-height: 20px; flex: none; }
.b-ist { width: 184px; }
.ist { width: 20px; height: 20px; border-radius: 2px; background: #00a5ec; font: bold 11px/20px "Open Sans", sans-serif; text-align: center; letter-spacing: -.2px; }
.b-yt { width: 40px; }
.b-home { width: 88px; }
.b-host { width: 157px; gap: 9px; }
.b-all { width: 103px; gap: 9px; }
.b-toc { width: 190px; gap: 8px; }
.b-pay { width: 137px; gap: 10px; }
.b-mail { width: 195px; gap: 8px; }
.b-stu { width: 140px; gap: 9px; }
.b-cou { width: 124px; gap: 8px; }
.b-new { width: 231px; gap: 8px; }
.t-ist { letter-spacing: -.065px; }
.t-home { letter-spacing: .1px; }
.t-host { letter-spacing: -.12px; }
.t-all { letter-spacing: .23px; }
.deva { font-size: 16.300px; line-height: 16px; }
.t-pay { letter-spacing: .04px; }
.t-ml { letter-spacing: .14px; }
.t-stu { letter-spacing: -.055px; }
.t-cou { letter-spacing: .1px; }
.apna { width: 18px; display: flex; flex-direction: column; align-items: center; font: bold 5px/5px "Open Sans", sans-serif; color: #17100f; }
.apna i { font-style: normal; font-size: 4.500px; letter-spacing: -.3px; color: #f2a81d; }

/* page */
.page { height: 869px; flex: none; display: flex; justify-content: center; padding-top: 13px; background: linear-gradient(135deg, #4c1d95, #1e1b4b); overflow: hidden; }
.card { width: 756px; height: 843px; border-radius: 27px; overflow: hidden; display: flex; flex-direction: column; box-shadow: 0 28px 56px -13px rgba(0,0,0,.35); font-size: 17px; }
.head { height: 90px; flex: none; padding: 0 18px; display: flex; justify-content: space-between; background: linear-gradient(90deg, #581c87, #1e3a8a 50%, #312e81); }
.titles { padding-top: 18px; }
h1 { margin: 0; height: 31px; padding-left: 3px; display: flex; align-items: center; gap: 9px; font-size: 21.300px; letter-spacing: -.02px; line-height: 31px; font-weight: 700; text-shadow: 0 2px 3px rgba(0,0,0,.3); }
.titles p { margin: 0; font-size: 14.700px; letter-spacing: .06px; line-height: 23px; color: #dcd7ee; }
.head-actions { display: flex; align-items: center; gap: 9px; }
.round { border-radius: 50%; background: rgba(255,255,255,.2); display: flex; align-items: center; justify-content: center; }
.trash { width: 39px; height: 41px; margin-top: -1px; }
.sun { width: 46px; height: 49px; margin-top: -1px; }
.trash svg { margin-right: 1px; }
.sun svg { margin-top: 3px; }

.chat { height: 516px; flex: none; display: flex; }
.messages { flex: 1; overflow: hidden; padding: 0 18px; display: flex; flex-direction: column; gap: 18px; background: linear-gradient(to bottom right, #1f2937, #1f183a 50%, #14233f); }
.msg { display: flex; align-items: flex-end; gap: 13.500px; flex: none; }
.first { margin-top: -5px; }
.me { justify-content: flex-end; }
.body { display: flex; flex-direction: column; align-items: flex-start; }
.me .body { align-items: flex-end; }
.avatar { width: 36px; height: 36px; border-radius: 50%; background: linear-gradient(90deg, #3b82f6, #06b6d4); display: flex; align-items: center; justify-content: center; }
.me .avatar { background: linear-gradient(90deg, #a855f7, #ec4899); }
.me .ghost { background: none; }
.bubble { padding: 13px 18px 14px; border: 1px solid #614a8c; border-radius: 18px; line-height: 27px; background: linear-gradient(90deg, #374151, #4b5563); color: #f3f4f6; box-shadow: 0 4px 7px rgba(0,0,0,.12); }
.me .bubble { border: 0; padding: 13px 18px 14px; color: #fff; background: linear-gradient(90deg, #a855f7, #ec4899); }
.me.last .bubble { padding: 10px 18px 17px; }
.m-1 { letter-spacing: .035px; }
.m-2 { letter-spacing: .06px; }
.m-3 { letter-spacing: .1px; }
.m-4 { font-size: 17.500px; letter-spacing: .5px; }
.m-5 { letter-spacing: .05px; }
time { margin-top: 4px; height: 23px; line-height: 22px; font-size: 14.900px; letter-spacing: .04px; color: #9ca3af; display: flex; }
.scroll { width: 19px; background: #fcfcfc; display: flex; flex-direction: column; align-items: center; padding: 6px 0 5px; }
.thumb { width: 11px; height: 116px; margin-top: 220px; border-radius: 6px; background: #8b8b8b; }
.down { margin-top: auto; }

.foot { flex: 1; padding: 13px 18px 18px; background: linear-gradient(90deg, #1f2a37, #291845 50%, #152347); }
.chips { display: flex; flex-wrap: wrap; justify-content: center; gap: 14px; }
.chip { height: 47px; padding: 0; border: 1px solid #4c3877; border-radius: 24px; background: rgba(55,65,81,.5); color: #d8b4fe; font: 17px/24px "Open Sans", sans-serif; letter-spacing: .045px; }
.c1 { width: 313px; } .c2 { width: 241px; } .c3 { width: 283px; } .c4 { width: 287px; }
.compose { margin-top: 27px; display: flex; justify-content: space-between; }
.input { width: 620px; height: 71px; border: 2px solid #4b3675; border-radius: 13.500px; background: #202738; padding: 2px 0 0 18px; display: flex; align-items: center; gap: 10px; font-size: 19px; letter-spacing: -.05px; color: #d8b4fe; }
.send { width: 82px; height: 71px; border-radius: 13.500px; background: #9ca3af; display: flex; align-items: center; justify-content: center; box-shadow: 0 6px 12px rgba(0,0,0,.2); }
.send svg { margin-top: 2px; }

/* taskbar */
.taskbar { height: 60px; flex: none; display: flex; align-items: center; background: #eee; border-top: 1px solid #b9b5c6; color: #1b1b1b; font-size: 14px; }
.weather { width: 585px; padding-left: 24px; display: flex; align-items: center; }
.w-icon { position: relative; width: 40px; height: 42px; padding-top: 2px; }
.w-icon b { position: absolute; left: 15px; top: -3px; width: 20px; height: 20px; border-radius: 50%; background: #c42b1c; color: #fff; font-size: 12px; line-height: 20px; text-align: center; }
.w-text { display: flex; flex-direction: column; align-items: flex-start; line-height: 20px; margin-top: -1px; }
.t-clear { color: #5d5d5d; letter-spacing: .25px; }
.search { width: 274px; height: 39px; margin: 0 3px 0 17px; border: 1px solid #d9d9d9; border-bottom-color: #bfbfbf; border-radius: 20px; background: #fafafa; display: flex; align-items: center; padding: 0 7px 0 14px; gap: 12px; font-size: 15.800px; letter-spacing: .1px; color: #5a5a5a; }
.trees { margin-left: auto; }
.task { position: relative; width: 48px; height: 48px; margin: 0 3.500px; display: flex; align-items: center; justify-content: center; }
.run::after, .current::after { content: ""; position: absolute; left: 20px; bottom: 0; width: 8px; height: 4px; border-radius: 2px; background: #8a8a8a; }
.current { background: #f9f9f9; border-radius: 5px; box-shadow: 0 0 0 1px #e4e4e4; }
.current::after { left: 14px; width: 20px; background: #0f78d4; }
.badge { position: absolute; right: 3px; top: 3px; }
.tray { margin-left: auto; padding-right: 24px; display: flex; align-items: center; }
.cloud { margin-left: 23px; }
.lang { width: 28px; margin-left: 24px; display: flex; flex-direction: column; align-items: center; line-height: 20px; }
.wifi { margin-left: 23px; }
.vol { margin-left: 10px; }
.bat { margin-left: 9px; }
.clock { margin: -2px 0 0 20px; display: flex; flex-direction: column; align-items: flex-end; line-height: 20px; }
.t-time { letter-spacing: .2px; }
.t-date { letter-spacing: .39px; }
```
